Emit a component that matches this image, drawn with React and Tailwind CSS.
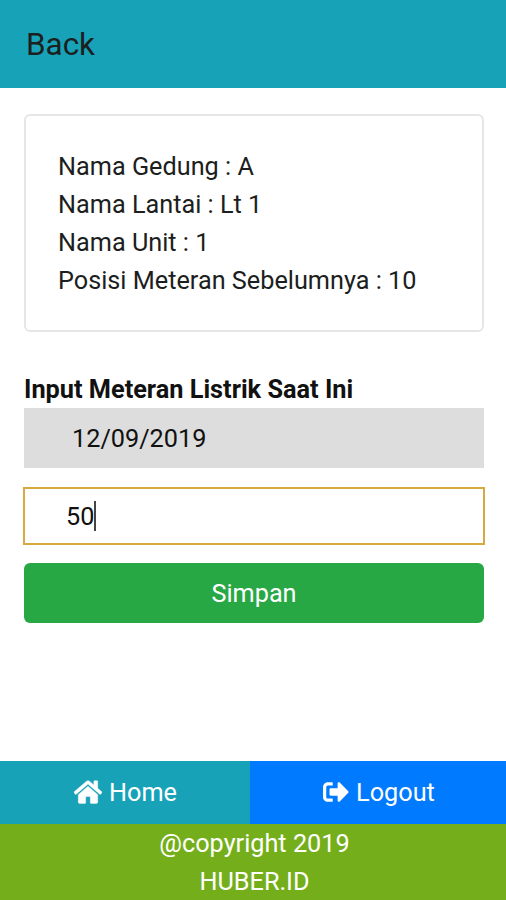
import { FaSignOutAlt } from "react-icons/fa";

function HomeIcon() {
  return (
    <svg viewBox="0 0 576 512" fill="currentColor" stroke="currentColor" strokeWidth="8" className="mb-px h-[26px] w-[28px]" preserveAspectRatio="none">
      <path d="M488 312.7V456c0 13.3-10.7 24-24 24H348c-6.6 0-12-5.4-12-12V356c0-6.6-5.4-12-12-12h-72c-6.6 0-12 5.4-12 12v112c0 6.6-5.4 12-12 12H112c-13.3 0-24-10.7-24-24V312.7c0-3.6 1.6-7 4.4-9.3l188-154.8c4.4-3.6 10.8-3.6 15.3 0l188 154.8c2.7 2.3 4.3 5.7 4.3 9.3zm83.6-60.9L488 182.9V44.4c0-6.6-5.4-12-12-12h-56c-6.6 0-12 5.4-12 12V117l-89.5-73.7c-17.7-14.6-43.3-14.6-61 0L4.4 251.8c-5.1 4.2-5.8 11.8-1.6 16.9l25.5 31c4.2 5.1 11.8 5.8 16.9 1.6l235.2-193.7c4.4-3.6 10.8-3.6 15.3 0l235.2 193.7c5.1 4.2 12.7 3.5 16.9-1.6l25.5-31c4.2-5.2 3.4-12.7-1.7-16.9z" />
    </svg>
  );
}

export default function App() {
  return (
    <div className="flex h-[900px] w-[506px] flex-col overflow-hidden bg-white font-[Roboto,sans-serif] text-[25.25px] leading-[38px] text-[#1c1e20]">
      <header className="flex h-[88px] shrink-0 items-center bg-[#17a2b8] pl-[26px] pt-[2px] text-[31.4px]">
        <span>Back</span>
      </header>
      <main className="flex grow flex-col pl-6 pr-[22px] pt-[26px]">
        <section className="h-[218px] shrink-0 rounded-md border-2 border-[#e6e6e6] pl-8 pt-8">
          <p>Nama Gedung : A</p>
          <p>Nama Lantai : Lt 1</p>
          <p>Nama Unit : 1</p>
          <p>Posisi Meteran Sebelumnya : 10</p>
        </section>
        <h2 className="mt-[39px] h-[37px] text-[25.3px] font-bold text-[#111111]">Input Meteran Listrik Saat Ini</h2>
        <div className="flex h-[60px] shrink-0 items-center bg-[#dddddd] pl-12 pt-[2px] text-[#111111]">12/09/2019</div>
        <div className="-ml-px -mr-px mt-[19px] flex h-[58px] shrink-0 items-center border-2 border-[#d9a941] pl-[41px] text-[#111111]">
          <span className="pt-[2px]">50</span>
          <span className="h-[30px] w-[2px] bg-[#444444]" />
        </div>
        <button className="mt-[18px] h-[60px] shrink-0 rounded-md bg-[#28a745] pt-[2px] text-white">Simpan</button>
      </main>
      <nav className="flex h-[63px] shrink-0 text-white">
        <a className="flex w-[250px] items-center justify-center gap-[7px] bg-[#17a2b8] pl-px">
          <HomeIcon />
          <span className="pt-px">Home</span>
        </a>
        <a className="flex grow items-center justify-center gap-[7px] bg-[#007bff] pl-[2px]">
          <FaSignOutAlt className="mb-[2px] size-[26px]" />
          <span className="pt-px">Logout</span>
        </a>
      </nav>
      <footer className="h-[76px] shrink-0 bg-[#74af1b] pl-[3px] pt-px text-center text-white">
        <p>@copyright 2019</p>
        <p>HUBER.ID</p>
      </footer>
    </div>
  );
}
